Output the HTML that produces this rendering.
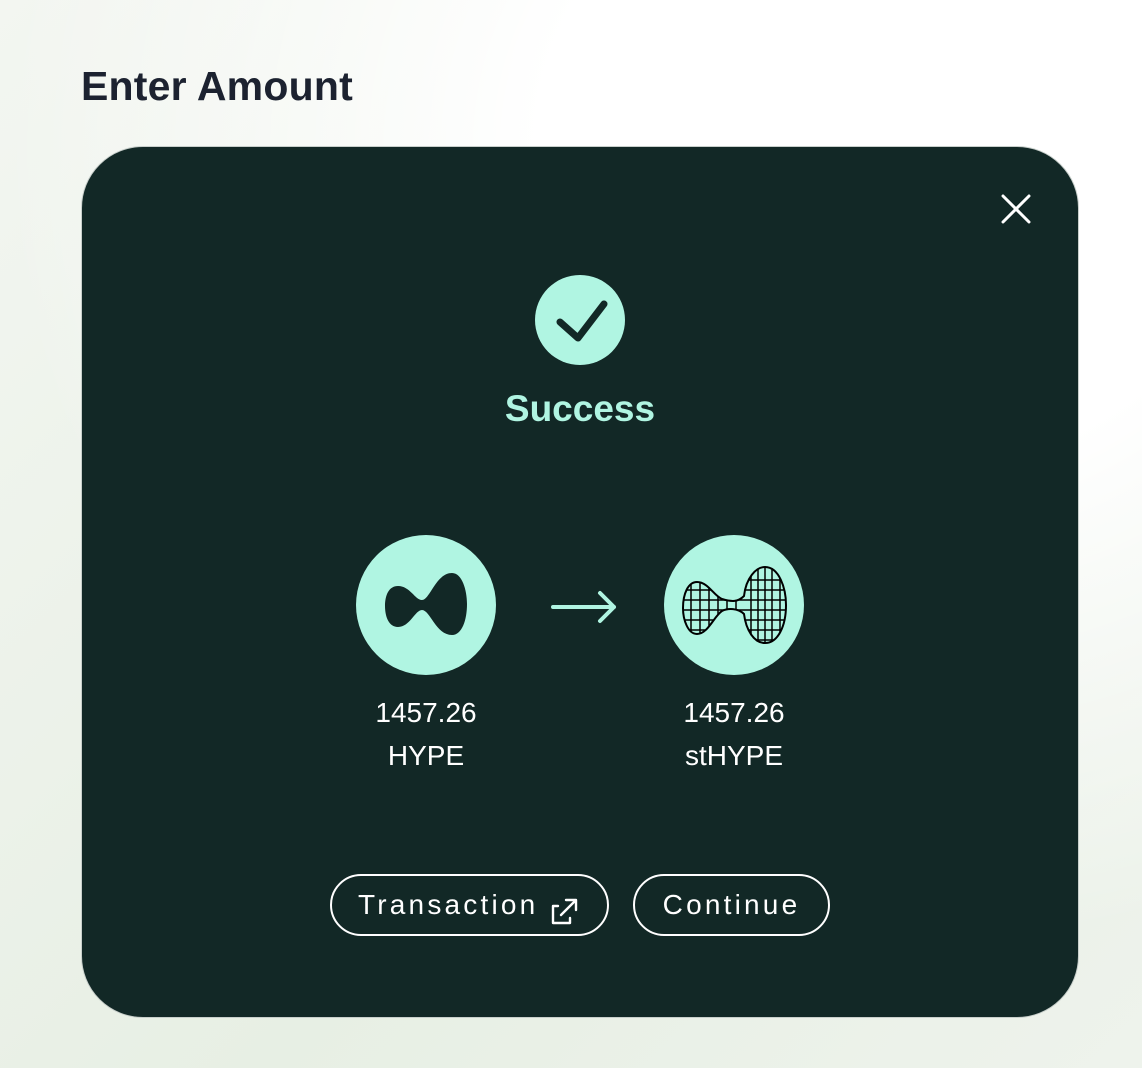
<!DOCTYPE html>
<html><head><meta charset="utf-8"><style>
html,body{margin:0;padding:0}
body{width:1142px;height:1068px;position:relative;overflow:hidden;font-family:"Liberation Sans",sans-serif;
background:radial-gradient(ellipse 900px 800px at 900px 150px,#ffffff 40%,rgba(255,255,255,0) 100%),linear-gradient(135deg,#f3f6f1 0%,#e7efe4 60%,#eef3ec 100%);}
.h{position:absolute;left:81px;top:63px;font-size:41px;font-weight:bold;color:#1c2230;letter-spacing:0.2px}
.card{position:absolute;left:81px;top:146px;width:998px;height:872px;border-radius:62px;background:#122826;border:1px solid #c8cfcb;box-sizing:border-box}
.t{position:absolute;color:#fff;text-align:center;font-size:28px;width:200px}
.btn{position:absolute;top:874px;height:62px;border:2px solid #fff;border-radius:31px;box-sizing:border-box;color:#fff;font-size:28px;letter-spacing:3.2px;display:flex;align-items:center;justify-content:center}
</style></head><body>
<div class="h">Enter Amount</div>
<div class="card"></div>
<svg style="position:absolute;left:0;top:0" width="1142" height="1068">
<defs><clipPath id="c"><path id="sh" d="M697 582C708 582 714 596 722 599C732 602 738 602 744 596C746 578 756 567 765 567C779 567 786 588 786 605C786 626 778 643 765 643C754 643 746 630 744 614C738 608 728 608 722 611C714 616 708 634 697 634C688 634 683 620 683 608C683 594 688 582 697 582Z"/></clipPath></defs>
<path d="M1003 196L1029 222M1029 196L1003 222" stroke="#fff" stroke-width="3" stroke-linecap="round"/>
<circle cx="580" cy="320" r="45" fill="#b0f5e2"/>
<path d="M560 322L578 338L604 304" stroke="#122826" stroke-width="7" fill="none" stroke-linecap="round" stroke-linejoin="round"/>
<circle cx="426" cy="605" r="70" fill="#b0f5e2"/>
<path d="M398 586C410 586 415 600 422 600C430 600 436 573 452 573C462 573 467 590 467 604C467 620 462 635 452 635C436 635 430 610 422 610C415 610 410 627 398 627C389 627 385 617 385 606C385 595 389 586 398 586Z" fill="#122826"/>
<path d="M553 607H614M600 593L614 607L600 621" stroke="#b0f5e2" stroke-width="4" fill="none" stroke-linecap="round" stroke-linejoin="round"/>
<circle cx="734" cy="605" r="70" fill="#b0f5e2"/>
<g stroke="#000" stroke-width="1.5" fill="none" clip-path="url(#c)">
<path d="M680 580H790M680 590H790M680 600H790M680 610H790M680 620H790M680 630H790M680 640H790"/>
<path d="M691 560V650M700 560V650M709 560V650M718 560V650M727 560V650M736 560V650M751 560V650M758 560V650M765 560V650M772 560V650M780 560V650"/>
</g>
<use href="#sh" stroke="#000" stroke-width="2" fill="none"/>
<path d="M558 909H553V926H570V921M561 918L575 904M566 903H576V913" stroke="#fff" stroke-width="2.4" fill="none" stroke-linecap="round" stroke-linejoin="round" transform="translate(0,-3)"/>
</svg>
<div style="position:absolute;left:460px;top:388px;width:240px;text-align:center;color:#b0f5e2;font-size:37px;font-weight:bold">Success</div>
<div class="t" style="left:326px;top:697px">1457.26</div>
<div class="t" style="left:326px;top:740px">HYPE</div>
<div class="t" style="left:634px;top:697px">1457.26</div>
<div class="t" style="left:634px;top:740px">stHYPE</div>
<div class="btn" style="left:330px;width:279px;justify-content:flex-start;padding-left:26px">Transaction</div>
<div class="btn" style="left:633px;width:197px">Continue</div>
</body></html>
